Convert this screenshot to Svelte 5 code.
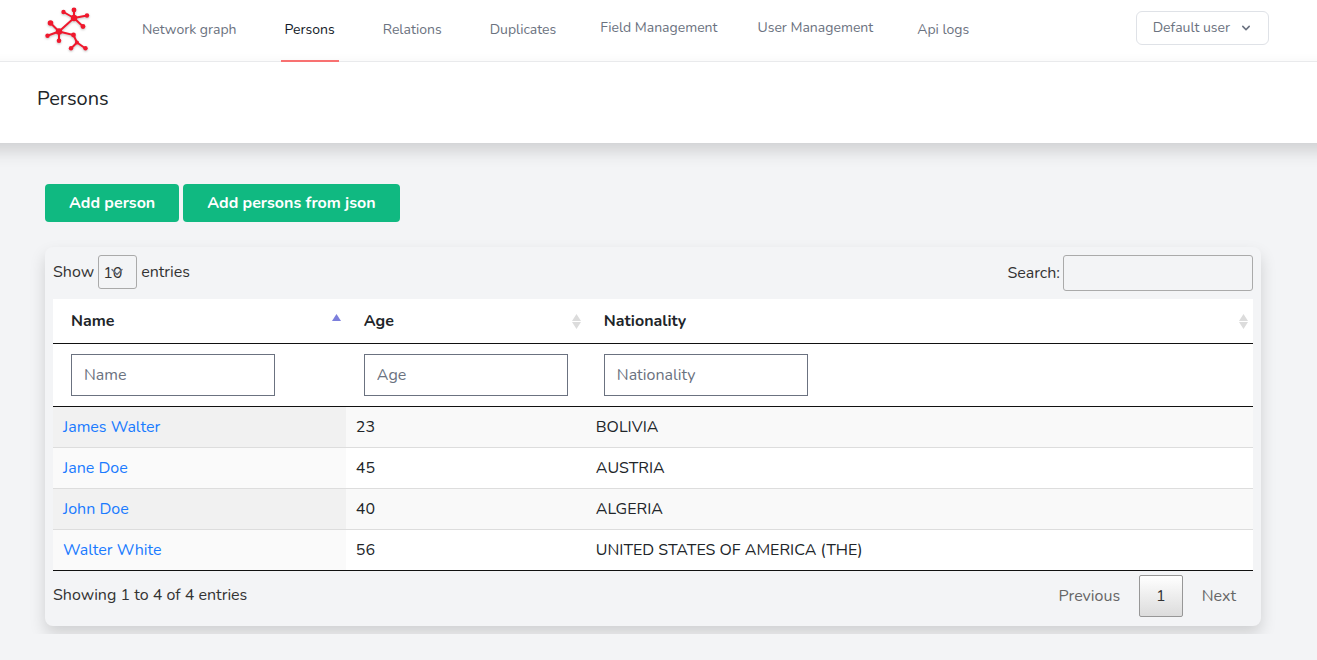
<script>
  const links = [
    { label: 'Network graph', tab: true },
    { label: 'Persons', tab: true, active: true },
    { label: 'Relations', tab: true },
    { label: 'Duplicates', tab: true },
    { label: 'Field Management' },
    { label: 'User Management' },
    { label: 'Api logs', tab: true },
  ];
  const columns = [
    { label: 'Name', key: 'name' },
    { label: 'Age', key: 'age' },
    { label: 'Nationality', key: 'nationality' },
  ];
  const people = [
    { name: 'James Walter', age: '23', nationality: 'BOLIVIA' },
    { name: 'Jane Doe', age: '45', nationality: 'AUSTRIA' },
    { name: 'John Doe', age: '40', nationality: 'ALGERIA' },
    { name: 'Walter White', age: '56', nationality: 'UNITED STATES OF AMERICA (THE)' },
  ];

  let sortKey = $state('name');
  let ascending = $state(true);
  let search = $state('');
  let filters = $state({ name: '', age: '', nationality: '' });

  const has = (text, part) => text.toLowerCase().includes(part.toLowerCase());
  const rows = $derived(
    people
      .filter((p) => columns.every((c) => has(p[c.key], filters[c.key])))
      .filter((p) => columns.some((c) => has(p[c.key], search)))
      .sort((a, b) => a[sortKey].localeCompare(b[sortKey]) * (ascending ? 1 : -1))
  );

  function sortBy(key) {
    ascending = sortKey === key ? !ascending : true;
    sortKey = key;
  }
</script>

<nav class="topbar">
  <a class="logo" href="#home" aria-label="Home">
    <svg width="48" height="48" viewBox="0 0 48 48">
      <g fill="none" stroke="#f0182d" stroke-width="2" stroke-linecap="round">
        <path d="M15 27.500 30 14M15 27.500 7 19.500M15 27.500 4 31.500M15 27.500v9M15 27.500l14.500 3.500 3.500 7.500" />
        <path d="M30 14V6M30 14 19.500 8M30 14l13-2.500M30 14l9 8.500M33 38.500l-6 6M33 38.500l8.500 6" />
      </g>
      <g fill="#f0182d">
        <circle cx="15" cy="27.500" r="3.200" /><circle cx="30" cy="14" r="3.200" />
        <circle cx="6.500" cy="19" r="2.800" /><circle cx="3.500" cy="31.700" r="2.200" />
        <circle cx="15" cy="36.700" r="2.300" /><circle cx="29.500" cy="31" r="2.400" />
        <circle cx="30" cy="6" r="2.400" /><circle cx="19.500" cy="8" r="2.200" />
        <circle cx="43" cy="11.500" r="2.200" /><circle cx="39" cy="22.500" r="2.400" />
        <circle cx="33" cy="38.500" r="2" /><circle cx="27" cy="44.300" r="2.200" /><circle cx="41.500" cy="44.300" r="2.200" />
      </g>
    </svg>
  </a>
  <div class="links">
    {#each links as link}
      <a href="#nav" class:tab={link.tab} class:active={link.active}>{link.label}</a>
    {/each}
  </div>
  <button class="user" type="button">
    Default user
    <svg width="16" height="16" viewBox="0 0 20 20" fill="#6b7280">
      <path fill-rule="evenodd" clip-rule="evenodd" d="M5.293 7.293a1 1 0 0 1 1.414 0L10 10.586l3.293-3.293a1 1 0 1 1 1.414 1.414l-4 4a1 1 0 0 1-1.414 0l-4-4a1 1 0 0 1 0-1.414z" />
    </svg>
  </button>
</nav>

<header class="heading"><h1>Persons</h1></header>

<main>
  <div class="actions">
    <button type="button">Add person</button>
    <button type="button">Add persons from json</button>
  </div>

  <div class="clip">
    <section class="card">
      <div class="controls">
        <div class="control">
          <label for="length">Show</label>
          <span class="select">
            <select id="length"><option>10</option><option>25</option><option>50</option><option>100</option></select>
            <svg width="14" height="14" viewBox="0 0 14 14" fill="none" stroke="#6b7280" stroke-width="1.500" stroke-linecap="round" stroke-linejoin="round"><path d="M2 4.500l5 5 5-5" /></svg>
          </span>
          <span>entries</span>
        </div>
        <div class="control search">
          <label for="search">Search:</label>
          <input id="search" type="search" bind:value={search} />
        </div>
      </div>

      <table>
        <thead>
          <tr>
            {#each columns as col}
              <th>
                <button type="button" onclick={() => sortBy(col.key)}>
                  {col.label}
                  <svg width="9" height="15" viewBox="0 0 9 15">
                    {#if sortKey !== col.key}
                      <path fill="#dcdcdc" d="M4.500 0 9 7H0zM4.500 15 0 8h9z" />
                    {:else if ascending}
                      <path fill="#7c7fdc" d="M4.500 0 9 7H0z" />
                    {:else}
                      <path fill="#7c7fdc" d="M4.500 15 0 8h9z" />
                    {/if}
                  </svg>
                </button>
              </th>
            {/each}
          </tr>
          <tr class="filters">
            {#each columns as col}
              <th><input type="text" placeholder={col.label} aria-label={col.label} bind:value={filters[col.key]} /></th>
            {/each}
          </tr>
        </thead>
        <tbody>
          {#each rows as person}
            <tr>
              <td class:sorted={sortKey === 'name'}><a href="#person">{person.name}</a></td>
              <td class:sorted={sortKey === 'age'}>{person.age}</td>
              <td class:sorted={sortKey === 'nationality'}>{person.nationality}</td>
            </tr>
          {/each}
        </tbody>
      </table>

      <div class="footer">
        <span class="info">Showing 1 to {rows.length} of {rows.length} entries</span>
        <div class="pages">
          <button type="button">Previous</button>
          <button type="button" class="current">1</button>
          <button type="button">Next</button>
        </div>
      </div>
    </section>
  </div>
</main>

<style>
  :global(body) {
    margin: 0;
    overflow-x: hidden;
    background: #f3f4f6;
    color: #212529;
    font: 16px/24px Nunito, Lato, sans-serif;
  }
  * { box-sizing: border-box; }
  a { text-decoration: none; }
  button, input, select { font: inherit; color: inherit; }

  .topbar {
    display: flex;
    align-items: flex-start;
    height: 62px;
    padding: 0 48px 0 44px;
    background: #fff;
    border-bottom: 1px solid #eeeff1;
  }
  .logo { padding-top: 4px; height: 52px; }
  .logo svg { display: block; filter: drop-shadow(0 1px 1px rgba(0, 0, 0, 0.25)); }
  .links { display: flex; gap: 40px; flex: 1; margin-left: 46px; }
  .links a {
    height: 62px;
    padding-top: 18px;
    font-size: 14px;
    line-height: 20px;
    color: #6b7280;
    white-space: nowrap;
  }
  .links .tab { padding: 20px 4px 0; border-bottom: 2px solid transparent; }
  .links .active { color: #111827; border-color: #f87171; }
  .user {
    display: flex;
    align-items: center;
    gap: 8px;
    height: 34px;
    margin-top: 11px;
    padding: 0 14px 0 16px;
    border: 1px solid #dfe2e7;
    border-radius: 6px;
    background: #fff;
    color: #6b7280;
    font-size: 14px;
  }

  /* Bleeds past both window edges so that its shadow keeps full strength there. */
  .heading {
    margin: 0 -20px;
    padding: 25px 57px 32px;
    background: #fff;
    box-shadow: 0 8px 16px rgba(0, 0, 0, 0.15);
  }
  h1 { margin: 0; font-size: 20px; line-height: 24px; font-weight: 400; }

  main { padding-top: 41px; }
  .actions { display: flex; gap: 4px; padding: 0 45px; }
  .actions button {
    height: 38px;
    padding: 0 24px;
    border: 0;
    border-radius: 4px;
    background: #10b981;
    color: #fff;
    font-weight: 700;
  }

  .clip { overflow: hidden; padding: 25px 56px 8px 45px; }
  .card {
    padding: 8px 8px 9px;
    border-radius: 8px;
    background: #f3f4f6;
    box-shadow: 0 8px 16px rgba(0, 0, 0, 0.15);
    color: #333;
  }
  .controls { display: flex; justify-content: space-between; padding-bottom: 8px; }
  .control { display: flex; align-items: flex-start; gap: 4px; line-height: 34px; }
  .search { gap: 3px; line-height: 36px; }
  .select { display: grid; align-items: center; }
  .select > * { grid-area: 1 / 1; }
  .select svg { margin-left: 12px; pointer-events: none; }
  select {
    appearance: none;
    width: 39px;
    height: 34px;
    padding: 0 4px 2px;
    border: 1px solid #aaa;
    border-radius: 3px;
    background: transparent;
  }
  #search {
    width: 190px;
    height: 36px;
    padding: 5px;
    border: 1px solid #aaa;
    border-radius: 3px;
    background: transparent;
  }

  table { width: 100%; table-layout: fixed; border-collapse: separate; border-spacing: 0; color: #212529; }
  th { padding: 0; background: #fff; border-bottom: 1px solid #111; text-align: left; }
  th:nth-child(1) { width: 24.4%; }
  th:nth-child(2) { width: 20%; }
  th button {
    display: flex;
    align-items: center;
    justify-content: space-between;
    width: 100%;
    height: 44px;
    padding: 0 5px 0 18px;
    border: 0;
    background: none;
    font-weight: 700;
  }
  .filters th { padding: 10px 18px; }
  .filters input {
    display: block;
    width: 204px;
    height: 42px;
    padding: 8px 12px;
    border: 1px solid #6b7280;
    background: #fff;
    font-weight: 400;
  }
  ::placeholder { color: #6b7280; opacity: 1; }
  td { padding: 8px 10px; background: #fff; border-bottom: 1px solid #ddd; }
  td a { color: #1a7bff; }
  tr:last-child td { border-bottom-color: #111; }
  tr:nth-child(odd) td { background: #f9f9f9; }
  td.sorted { background: #fafafa; }
  tr:nth-child(odd) td.sorted { background: #f1f1f1; }

  .footer { display: flex; justify-content: space-between; padding-top: 4px; }
  .info { line-height: 40px; }
  .pages { display: flex; gap: 2px; }
  .pages button {
    height: 42px;
    padding: 0 16px;
    border: 1px solid transparent;
    border-radius: 2px;
    background: none;
    color: #666;
  }
  .pages .current {
    border-color: #979797;
    background: linear-gradient(#fff, #dcdcdc);
    color: #333;
  }
</style>
